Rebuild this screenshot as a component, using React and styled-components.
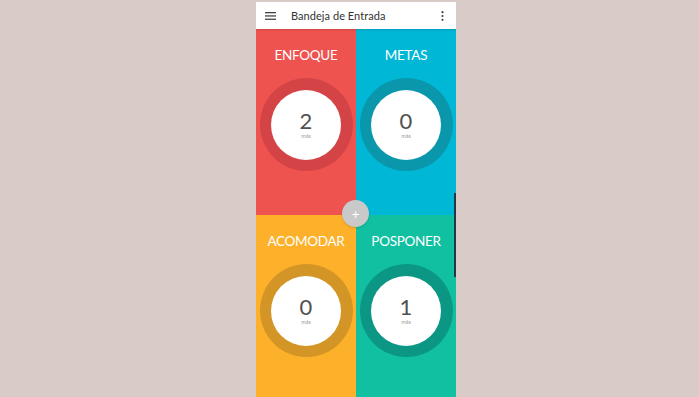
import React from "react";
import styled, { createGlobalStyle } from "styled-components";

const Global = createGlobalStyle`
  html, body { margin: 0; padding: 0; height: 100%; overflow: hidden; }
  body { background: #d9cbc7; font-family: "Lato", "Noto Sans", sans-serif; }
`;

const Phone = styled.div`
  position: relative;
  width: 200px;
  margin: 2px 0 0 256px;
  height: 395px;
  overflow: hidden;
  display: flex;
  flex-direction: column;
`;

const Header = styled.div`
  height: 27px;
  flex: none;
  background: #fff;
  display: flex;
  align-items: center;
  padding: 0 8px 0 8px;
  box-shadow: 0 1px 2px rgba(0,0,0,0.15);
  position: relative;
  z-index: 1;
`;

const IconBtn = styled.div`
  width: 12px;
  display: flex;
  align-items: center;
  justify-content: center;
  color: #444;
`;

const Title = styled.div`
  flex: 1;
  margin-left: 15px;
  font-size: 11px;
  color: #333;
  letter-spacing: 0.05px;
`;

const Grid = styled.div`
  display: grid;
  grid-template-columns: 100px 100px;
  grid-template-rows: 186px 186px;
  position: relative;
`;

const Quad = styled.div`
  background: ${(p) => p.$bg};
  display: flex;
  flex-direction: column;
  align-items: center;
  padding-top: 17px;
`;

const QuadTitle = styled.div`
  color: #fff;
  font-size: 13.5px;
  line-height: 18px;
  font-weight: 400;
  letter-spacing: -0.3px;
`;

const Ring = styled.div`
  margin-top: 14px;
  width: 93px;
  height: 93px;
  border-radius: 50%;
  background: ${(p) => p.$ring};
  display: flex;
  align-items: center;
  justify-content: center;
`;

const Inner = styled.div`
  width: 70px;
  height: 70px;
  border-radius: 50%;
  background: #fff;
  display: flex;
  flex-direction: column;
  align-items: center;
  justify-content: center;
`;

const Count = styled.div`
  font-size: 22px;
  line-height: 21px;
  color: #505050;
  font-weight: 400;
`;

const Small = styled.div`
  font-size: 5.5px;
  color: #999;
  line-height: 7px;
  margin-top: 2px;
`;

const Fab = styled.div`
  position: absolute;
  left: 86px;
  top: 171px;
  width: 27px;
  height: 27px;
  border-radius: 50%;
  background: #c9c9c9;
  color: #fff;
  font-size: 14px;
  display: flex;
  align-items: center;
  justify-content: center;
  box-shadow: 0 1px 2px rgba(0,0,0,0.15);
`;

const Scrollbar = styled.div`
  position: absolute;
  right: 0;
  top: 164px;
  width: 2px;
  height: 84px;
  background: #20394a;
`;

const data = [
  { t: "ENFOQUE", n: 2, bg: "#ef5350", ring: "#d44446" },
  { t: "METAS", n: 0, bg: "#00b7d6", ring: "#0a97ab" },
  { t: "ACOMODAR", n: 0, bg: "#fdb12a", ring: "#d39526" },
  { t: "POSPONER", n: 1, bg: "#10c0a0", ring: "#0b9784" },
];

export default function App() {
  return (
    <>
      <Global />
      <Phone>
        <Header>
          <IconBtn>
            <svg width="11" height="8" viewBox="0 0 11 8">
              <rect x="0" y="0" width="11" height="1.3" fill="#444" />
              <rect x="0" y="3.3" width="11" height="1.3" fill="#444" />
              <rect x="0" y="6.6" width="11" height="1.3" fill="#444" />
            </svg>
          </IconBtn>
          <Title>Bandeja de Entrada</Title>
          <IconBtn>
            <svg width="3" height="10" viewBox="0 0 3 10">
              <circle cx="1.5" cy="1.2" r="1.1" fill="#444" />
              <circle cx="1.5" cy="5" r="1.1" fill="#444" />
              <circle cx="1.5" cy="8.8" r="1.1" fill="#444" />
            </svg>
          </IconBtn>
        </Header>
        <Grid>
          {data.map((d) => (
            <Quad key={d.t} $bg={d.bg}>
              <QuadTitle>{d.t}</QuadTitle>
              <Ring $ring={d.ring}>
                <Inner>
                  <Count>{d.n}</Count>
                  <Small>más</Small>
                </Inner>
              </Ring>
            </Quad>
          ))}
          <Fab>+</Fab>
          <Scrollbar />
        </Grid>
      </Phone>
    </>
  );
}
